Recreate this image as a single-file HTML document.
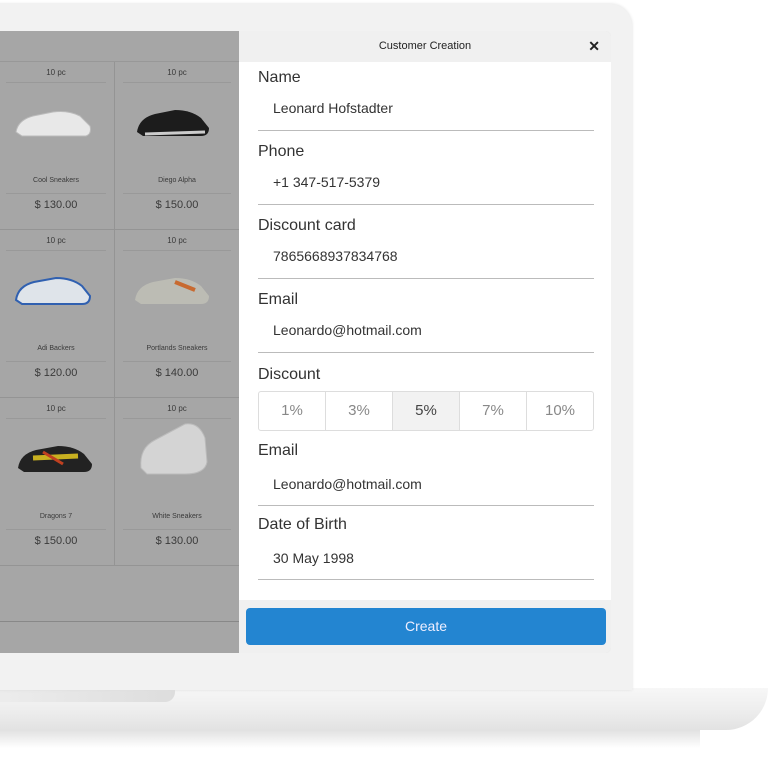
<!DOCTYPE html>
<html><head><style>
*{box-sizing:border-box;margin:0;padding:0}
body{width:768px;height:768px;background:#fff;position:relative;overflow:hidden;font-family:"Liberation Sans",sans-serif}
.bezel{position:absolute;left:-20px;top:4px;width:652px;height:686px;background:#f2f2f2;border-radius:0 22px 0 0;box-shadow:0 0 3px #ddd}
.base{position:absolute;left:-20px;top:688px;width:788px;height:42px;background:linear-gradient(#f7f7f7,#ececec 60%,#e2e2e2);border-radius:0 0 60px 0}
.notch{position:absolute;left:-20px;top:688px;width:195px;height:14px;background:linear-gradient(90deg,#eee,#ddd);border-radius:0 0 10px 0}
.shadow{position:absolute;left:0;top:728px;width:700px;height:20px;background:linear-gradient(#c8c8c8,#fff);opacity:.6}
.screen{position:absolute;left:0;top:31px;width:611px;height:622px;background:#a6a6a6;border-radius:0 6px 6px 0;overflow:hidden}
.topbar{position:absolute;left:0;top:0;width:239px;height:31px;background:#a6a6a6;border-bottom:1px solid #989898}
.cell{position:absolute;width:117px;height:168px;border-right:1px solid #949494;border-bottom:1px solid #949494;text-align:center;color:#3a3a3a}
.cell .q{font-size:8px;margin:6px 8px 0;padding-bottom:5px;border-bottom:1px solid #999}
.cell .n{position:absolute;top:115px;width:100%;font-size:7px}
.cell .p{position:absolute;top:131px;left:8px;right:8px;border-top:1px solid #999;padding-top:5px;font-size:11px}
.cell svg{position:absolute;left:10px;top:40px}
.modal{position:absolute;left:239px;top:0;width:372px;height:622px;background:#fff}
.mh{height:31px;background:#f0f0f0;font-size:11px;text-align:center;line-height:31px;color:#222;position:relative}
.mh span{position:absolute;right:11px;top:0;font-size:14px;font-weight:bold}
.f{margin:0 17px 0 19px;border-bottom:1px solid #bbb;height:74px;position:relative}
.f .l{position:absolute;top:12px;left:0;font-size:16px;color:#333}
.f .v{position:absolute;top:43px;left:15px;font-size:14px;color:#333}
.disc{position:absolute;top:360px;left:19px;width:336px;height:40px;border:1px solid #ddd;border-radius:3px;display:flex}
.disc div{flex:1;border-right:1px solid #ddd;text-align:center;line-height:38px;font-size:15px;color:#888}
.disc div:last-child{border:none}
.foot{position:absolute;left:0;top:569px;width:372px;height:53px;background:#f0f0f0}
.btn{position:absolute;left:7px;top:8px;width:360px;height:37px;background:#2385d1;border-radius:4px;color:#eef;font-size:14px;text-align:center;line-height:37px}
</style></head><body>
<div class="shadow"></div>
<div class="base"></div><div class="notch"></div>
<div class="bezel"></div>
<div class="screen">
 <div class="topbar"></div>
 <div style="position:absolute;left:0;top:590px;width:239px;border-top:1px solid #888"></div>
 <div class="cell" style="left:-2px;top:31px"><div class="q">10 pc</div><svg width="95" height="40"><path d="M8 30 Q10 18 25 14 L45 10 Q60 8 72 14 L82 24 Q84 32 78 34 L14 34 Z" fill="#e8e8e8" stroke="#bbb"/></svg><div class="n">Cool Sneakers</div><div class="p">$ 130.00</div></div>
 <div class="cell" style="left:115px;top:31px;width:124px;border-right:none"><div class="q">10 pc</div><svg width="95" height="40"><path d="M12 30 Q14 16 30 12 L50 8 Q66 8 76 16 L84 26 Q84 34 76 34 L18 34 Z" fill="#1c1c1c"/><path d="M20 32 L80 30" stroke="#ccc" stroke-width="3"/></svg><div class="n">Diego Alpha</div><div class="p">$ 150.00</div></div>
 <div class="cell" style="left:-2px;top:199px"><div class="q">10 pc</div><svg width="95" height="40"><path d="M8 30 Q10 16 26 12 L48 8 Q64 8 74 16 L82 26 Q82 34 74 34 L14 34 Z" fill="#dfe4ea" stroke="#3060b0" stroke-width="2"/></svg><div class="n">Adi Backers</div><div class="p">$ 120.00</div></div>
 <div class="cell" style="left:115px;top:199px;width:124px;border-right:none"><div class="q">10 pc</div><svg width="95" height="40"><path d="M10 30 Q12 16 28 12 L50 8 Q66 8 76 16 L84 26 Q84 34 76 34 L16 34 Z" fill="#bcbcb4"/><path d="M50 12 L70 20" stroke="#c86a30" stroke-width="4"/></svg><div class="n">Portlands Sneakers</div><div class="p">$ 140.00</div></div>
 <div class="cell" style="left:-2px;top:367px"><div class="q">10 pc</div><svg width="95" height="40"><path d="M10 30 Q12 16 28 12 L50 8 Q66 8 76 16 L84 26 Q84 34 76 34 L16 34 Z" fill="#222"/><path d="M25 20 L70 18" stroke="#c8b020" stroke-width="5"/><path d="M35 14 L55 26" stroke="#c04020" stroke-width="3"/></svg><div class="n">Dragons 7</div><div class="p">$ 150.00</div></div>
 <div class="cell" style="left:115px;top:367px;width:124px;border-right:none"><div class="q">10 pc</div><svg width="95" height="60" style="top:20px"><path d="M16 50 Q14 30 30 22 L60 6 Q74 4 80 20 L82 44 Q80 56 60 56 L22 56 Z" fill="#d4d4d4" stroke="#bbb"/></svg><div class="n">White Sneakers</div><div class="p">$ 130.00</div></div>
 <div class="modal">
  <div class="mh">Customer Creation<span>✕</span></div>
  <div class="f" style="margin-top:-5px"><div class="l">Name</div><div class="v">Leonard Hofstadter</div></div>
  <div class="f"><div class="l">Phone</div><div class="v">+1 347-517-5379</div></div>
  <div class="f"><div class="l">Discount card</div><div class="v">7865668937834768</div></div>
  <div class="f"><div class="l">Email</div><div class="v">Leonardo@hotmail.com</div></div>
  <div style="position:absolute;top:335px;left:19px;font-size:16px;color:#333">Discount</div>
  <div class="disc"><div>1%</div><div>3%</div><div style="background:#f2f2f2;color:#444">5%</div><div>7%</div><div>10%</div></div>
  <div class="f" style="position:absolute;top:401px;left:0;width:336px;margin:0 0 0 19px"><div class="l" style="top:10px">Email</div><div class="v" style="top:44px">Leonardo@hotmail.com</div></div>
  <div class="f" style="position:absolute;top:475px;left:0;width:336px;margin:0 0 0 19px"><div class="l" style="top:10px">Date of Birth</div><div class="v" style="top:44px">30 May 1998</div></div>
  <div class="foot"><div class="btn">Create</div></div>
 </div>
</div>
</body></html>
